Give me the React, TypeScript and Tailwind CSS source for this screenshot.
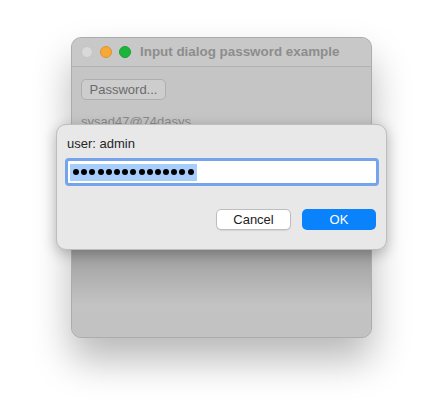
import React from "react";

const font = { fontFamily: '"Helvetica Neue", "Liberation Sans", Arial, sans-serif' };

const TrafficLights = () => (
  <div className="flex items-center gap-[7px]">
    <span className="w-[12px] h-[12px] rounded-full bg-[#d9d9d9] border border-[#c4c4c4]" />
    <span className="w-[12px] h-[12px] rounded-full bg-[#f5a937] border border-[#dc922a]" />
    <span className="w-[12px] h-[12px] rounded-full bg-[#1cb53c] border border-[#17a133]" />
  </div>
);

const App = () => {
  const dots = Array.from({ length: 15 });
  return (
    <div className="relative w-[442px] h-[412px] bg-white overflow-hidden" style={font}>
      <div className="pt-[37px] pl-[71px]">
        <div className="w-[301px] h-[301px] rounded-[10px] bg-[#c4c4c4] border border-[#acacac] overflow-hidden flex flex-col shadow-[0_22px_38px_rgba(0,0,0,0.28)]">
          <div className="h-[29px] shrink-0 flex items-center pl-[9px] gap-[9px] bg-[#c8c8c8] border-b border-[#b1b1b1]">
            <TrafficLights />
            <span className="text-[13.4px] font-bold text-[#8d8d8d]">Input dialog password example</span>
          </div>
          <div className="flex-1 flex flex-col bg-gradient-to-b from-[#c5c5c5] via-[#c5c5c5] to-[#c2c2c2] pl-[9px] pt-[12px]">
            <div className="w-[85px] h-[21px] rounded-[5px] border border-[#aeaeae] bg-[#cdcdcd] flex items-center justify-center text-[13px] text-[#6b6b6b]">
              Password...
            </div>
            <div className="mt-[14px] text-[13px] text-[#8a8a8a] leading-[16px]">sysad47@74dasys</div>
          </div>
        </div>
      </div>

      {/* shadow cast by the dialog onto the window */}
      <div className="absolute left-[72px] top-[249px] w-[299px] h-[55px] bg-gradient-to-b from-[#929292] to-transparent opacity-80" />

      <div className="absolute left-[56px] top-[124px] w-[331px] h-[126px] rounded-[10px] bg-[#e8e8e8] border border-[#bdbdbd] shadow-[0_4px_14px_rgba(0,0,0,0.25)]">
        <div className="pl-[10px] pt-[11px] text-[13px] text-[#262626] leading-[16px]">user: admin</div>
        <div className="ml-[8px] mt-[6px] w-[314px] h-[28px] rounded-[4px] border-[3px] border-[#75a3ec] bg-white flex items-center pl-[2px]">
          <span className="bg-[#a7cdfa] h-[17px] px-[3px] flex items-center gap-[2.2px]">
            {dots.map((_, i) => (
              <span key={i} className="w-[6px] h-[6px] rounded-full bg-black" />
            ))}
          </span>
        </div>
        <div className="flex justify-end gap-[11px] pr-[10px] mt-[23px]">
          <div className="w-[75px] h-[21px] rounded-[5px] bg-white border border-[#bdbdbd] shadow-[0_1px_1px_rgba(0,0,0,0.08)] flex items-center justify-center text-[13px] text-[#222]">
            Cancel
          </div>
          <div className="w-[74px] h-[21px] rounded-[5px] bg-[#0a82fb] flex items-center justify-center text-[13px] text-white">
            OK
          </div>
        </div>
      </div>
    </div>
  );
};

export default App;
